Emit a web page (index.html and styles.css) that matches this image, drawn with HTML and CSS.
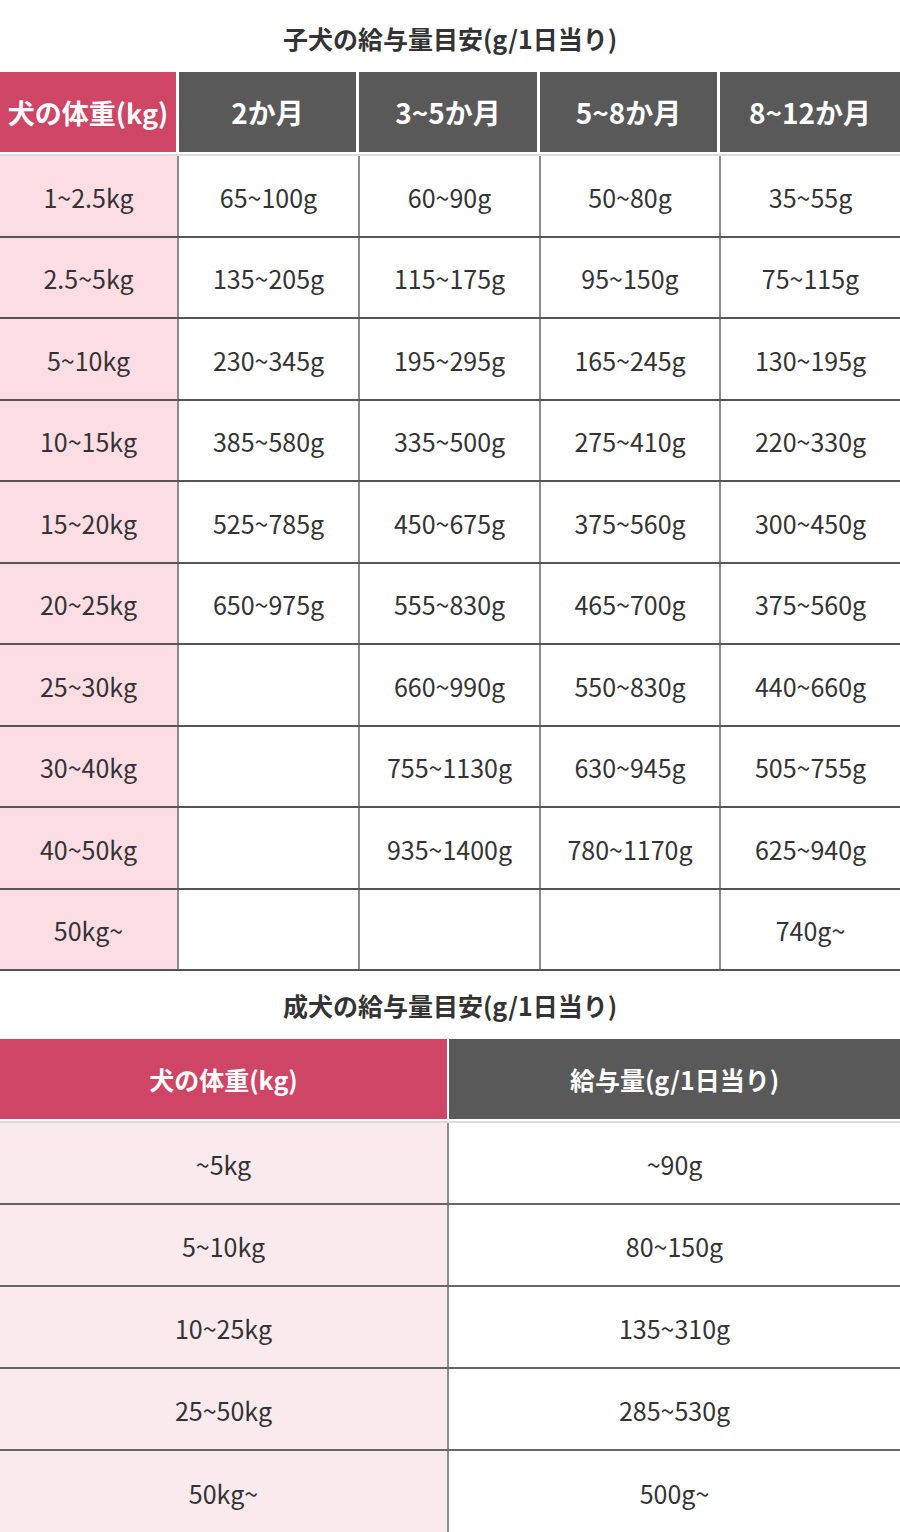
FILE: index.html
```html
<!DOCTYPE html>
<html lang="ja">
<head>
<meta charset="utf-8">
<title>給与量目安</title>
<link rel="stylesheet" href="styles.css">
</head>
<body>
<section class="puppy">
  <h2 class="title title-first">子犬の給与量目安(g/1日当り)</h2>
  <div class="head head5">
    <div class="hc pink">犬の体重(kg)</div>
    <div class="hc dark">2か月</div>
    <div class="hc dark">3~5か月</div>
    <div class="hc dark">5~8か月</div>
    <div class="hc dark">8~12か月</div>
  </div>
  <div class="body5">
    <div class="row"><div class="c w">1~2.5kg</div><div class="c">65~100g</div><div class="c">60~90g</div><div class="c">50~80g</div><div class="c">35~55g</div></div>
    <div class="row"><div class="c w">2.5~5kg</div><div class="c">135~205g</div><div class="c">115~175g</div><div class="c">95~150g</div><div class="c">75~115g</div></div>
    <div class="row"><div class="c w">5~10kg</div><div class="c">230~345g</div><div class="c">195~295g</div><div class="c">165~245g</div><div class="c">130~195g</div></div>
    <div class="row"><div class="c w">10~15kg</div><div class="c">385~580g</div><div class="c">335~500g</div><div class="c">275~410g</div><div class="c">220~330g</div></div>
    <div class="row"><div class="c w">15~20kg</div><div class="c">525~785g</div><div class="c">450~675g</div><div class="c">375~560g</div><div class="c">300~450g</div></div>
    <div class="row"><div class="c w">20~25kg</div><div class="c">650~975g</div><div class="c">555~830g</div><div class="c">465~700g</div><div class="c">375~560g</div></div>
    <div class="row"><div class="c w">25~30kg</div><div class="c"></div><div class="c">660~990g</div><div class="c">550~830g</div><div class="c">440~660g</div></div>
    <div class="row"><div class="c w">30~40kg</div><div class="c"></div><div class="c">755~1130g</div><div class="c">630~945g</div><div class="c">505~755g</div></div>
    <div class="row"><div class="c w">40~50kg</div><div class="c"></div><div class="c">935~1400g</div><div class="c">780~1170g</div><div class="c">625~940g</div></div>
    <div class="row"><div class="c w">50kg~</div><div class="c"></div><div class="c"></div><div class="c"></div><div class="c">740g~</div></div>
  </div>
</section>
<section class="adult">
  <h2 class="title">成犬の給与量目安(g/1日当り)</h2>
  <div class="head head2">
    <div class="hc pink">犬の体重(kg)</div>
    <div class="hc dark">給与量(g/1日当り)</div>
  </div>
  <div class="body2">
    <div class="row"><div class="c w2">~5kg</div><div class="c">~90g</div></div>
    <div class="row"><div class="c w2">5~10kg</div><div class="c">80~150g</div></div>
    <div class="row"><div class="c w2">10~25kg</div><div class="c">135~310g</div></div>
    <div class="row"><div class="c w2">25~50kg</div><div class="c">285~530g</div></div>
    <div class="row"><div class="c w2">50kg~</div><div class="c">500g~</div></div>
  </div>
</section>
</body>
</html>
```
FILE: styles.css
```css
html, body {
  margin: 0;
  padding: 0;
  background: #fff;
}
body {
  width: 900px;
  font-family: "Noto Sans CJK JP", "Noto Sans", sans-serif;
  color: #333;
}
.title {
  margin: 0;
  height: 68px;
  line-height: 68px;
  text-align: center;
  font-size: 25px;
  font-weight: 700;
  color: #333;
}
.title-first {
  height: 72px;
  padding-top: 4px;
  box-sizing: border-box;
}
.head {
  display: grid;
  height: 84px;
  padding-bottom: 2px;
  border-bottom: 2px solid #dcdcdc;
  box-sizing: border-box;
}
.head5 {
  grid-template-columns: 176px 177px 178px 177px 1fr;
  column-gap: 3px;
}
.head2 {
  grid-template-columns: 447px 1fr;
  column-gap: 2px;
}
.hc {
  display: flex;
  align-items: center;
  justify-content: center;
  color: #fff;
  font-weight: 700;
  font-size: 28px;
}
.head5 .pink {
  font-size: 27px;
}
.head2 .hc {
  font-size: 25px;
}
.pink { background: #cf4566; }
.dark { background: #595959; }
.body5 .row {
  display: grid;
  grid-template-columns: 177px 181px 181px 180px 1fr;
  height: 81.5px;
  border-bottom: 2px solid #555;
  box-sizing: border-box;
}
.body2 .row {
  display: grid;
  grid-template-columns: 447px 1fr;
  height: 82px;
  border-bottom: 2px solid #666;
  box-sizing: border-box;
}
.body2 .row:last-child { border-bottom: none; }
.c {
  display: flex;
  align-items: center;
  justify-content: center;
  font-size: 25px;
  color: #333;
  border-left: 2px solid #8c8c8c;
  padding-top: 2px;
  box-sizing: border-box;
}
.c.w, .c.w2 { border-left: none; }
.w { background: #fddde4; }
.w2 { background: #faeaee; }
```
